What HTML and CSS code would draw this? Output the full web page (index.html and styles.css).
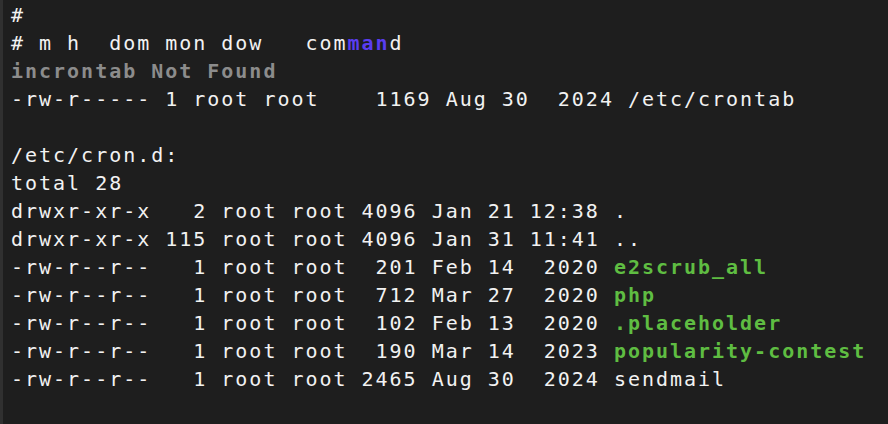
FILE: index.html
```html
<!DOCTYPE html>
<html>
<head>
<meta charset="utf-8">
<link rel="stylesheet" href="styles.css">
</head>
<body>
<pre class="term"><span class="line">#</span>
<span class="line"># m h  dom mon dow   com<span class="hl">man</span>d</span>
<span class="line"><span class="dim">incrontab Not Found</span></span>
<span class="line">-rw-r----- 1 root root    1169 Aug 30  2024 /etc/crontab</span>
<span class="line"> </span>
<span class="line">/etc/cron.d:</span>
<span class="line">total 28</span>
<span class="line">drwxr-xr-x   2 root root 4096 Jan 21 12:38 .</span>
<span class="line">drwxr-xr-x 115 root root 4096 Jan 31 11:41 ..</span>
<span class="line">-rw-r--r--   1 root root  201 Feb 14  2020 <span class="exe">e2scrub_all</span></span>
<span class="line">-rw-r--r--   1 root root  712 Mar 27  2020 <span class="exe">php</span></span>
<span class="line">-rw-r--r--   1 root root  102 Feb 13  2020 <span class="exe">.placeholder</span></span>
<span class="line">-rw-r--r--   1 root root  190 Mar 14  2023 <span class="exe">popularity-contest</span></span>
<span class="line">-rw-r--r--   1 root root 2465 Aug 30  2024 sendmail</span></pre>
</body>
</html>
```

FILE: styles.css
```css
html, body {
  margin: 0;
  padding: 0;
  background: #1e1e1e;
  height: 100%;
}

body {
  border-left: 3px solid #303030;
  box-sizing: border-box;
  overflow: hidden;
}

.term {
  margin: 0;
  padding: 1px 0 0 8px;
  font-family: "DejaVu Sans Mono", "Liberation Mono", monospace;
  font-size: 20px;
  letter-spacing: 1.98px;
  line-height: 28px;
  color: #f2f2f2;
  white-space: pre;
}

.line {
  display: inline;
}

.dim {
  color: #8c8c8c;
  font-weight: bold;
}

.hl {
  color: #5a3df0;
  font-weight: bold;
}

.exe {
  color: #5fbd42;
  font-weight: bold;
}
```
